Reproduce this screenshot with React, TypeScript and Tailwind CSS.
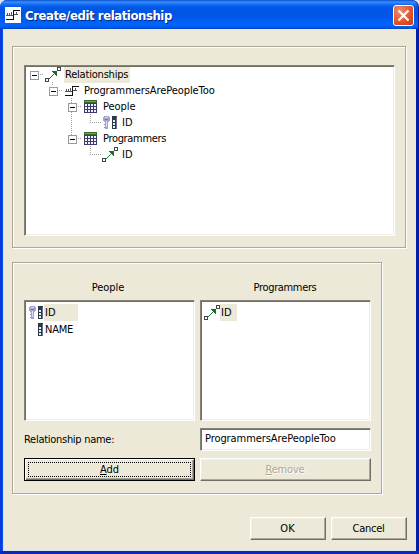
import type { ReactNode } from "react";

const sunken =
  "border border-t-[#858275] border-l-[#858275] border-r-white border-b-white bg-white shadow-[inset_1px_1px_0_#716f64,inset_-1px_-1px_0_#f1efe2]";
const raised =
  "bg-[#ece9d8] border border-t-white border-l-white border-r-[#716f64] border-b-[#716f64] shadow-[inset_-1px_-1px_0_#aca899,inset_1px_1px_0_#f1efe2]";
const etched =
  "border border-[#aca899] shadow-[1px_1px_0_#fff,inset_1px_1px_0_#fff]";

function LinkIcon() {
  return (
    <svg width="16" height="16" viewBox="0 0 16 16" className="shrink-0" shapeRendering="crispEdges">
      <path d="M4 12L11 5" stroke="#1b7d2f" strokeWidth="1" fill="none" shapeRendering="auto" />
      <path d="M7 4h5v5h-1v-1h-1v-1h-1v-1h-1v-1h-1z" fill="#14702a" />
      <rect x="0.5" y="11.5" width="3" height="3" fill="#fff" stroke="#444" />
      <rect x="12.5" y="0.5" width="3" height="3" fill="#fff" stroke="#444" />
    </svg>
  );
}

function SchemaIcon() {
  return (
    <svg width="16" height="16" viewBox="0 0 16 16" className="shrink-0" shapeRendering="crispEdges">
      <path d="M1 12.500h7.500V3.500H15" stroke="#111" fill="none" />
      <path d="M2.500 6v2M4.500 6v2M6.500 5v3M1 8.500h7M9 7.500h4M11.500 5v2" stroke="#555" fill="none" />
    </svg>
  );
}

function TableIcon() {
  return (
    <svg width="16" height="16" viewBox="0 0 16 16" className="shrink-0" shapeRendering="crispEdges">
      <rect x="1" y="1" width="13" height="13" fill="#3a3a6c" />
      <rect x="1" y="1" width="13" height="3" fill="#3f6b28" />
      <rect x="2" y="2" width="11" height="1" fill="#72a044" />
      {[5, 8, 11].map((y) =>
        [2, 5, 8, 11].map((x) => <rect key={`${x}-${y}`} x={x} y={y} width="2" height="2" fill="#f2f2ff" />)
      )}
    </svg>
  );
}

function ColumnIcon({ keyed = false }: { keyed?: boolean }) {
  return (
    <svg width="16" height="16" viewBox="0 0 16 16" className="shrink-0" shapeRendering="crispEdges">
      {keyed && (
        <g>
          <path d="M2 1h5v1h1v4h-1v1h-1v7h-3v-7h-1v-1h-1v-4h1z" fill="#a3a3d2" />
          <path d="M3 2h3v1h-3zM4 6h1v6h-1z" fill="#dadaf2" />
          <path d="M3 4h3v1h-3z" fill="#7777ac" />
          <path d="M2 9h1v1h-1zM2 12h1v1h-1z" fill="#8b8bbd" />
        </g>
      )}
      <rect x="10" y="1" width="5" height="13" fill="#2b3947" />
      <path d="M11 5h2v2h-2zM11 8h2v2h-2zM11 11h2v2h-2z" fill="#e6efff" />
      <path d="M14 2h1v12h-1z" fill="#66758c" />
    </svg>
  );
}

function Expander() {
  return (
    <svg width="9" height="9" viewBox="0 0 9 9" className="shrink-0" shapeRendering="crispEdges">
      <rect x="0.5" y="0.5" width="8" height="8" fill="#fff" stroke="#999" />
      <path d="M2 4.500h5" stroke="#000" />
    </svg>
  );
}

function TreeLines() {
  return (
    <svg
      width="110"
      height="98"
      viewBox="0 0 110 98"
      className="pointer-events-none absolute left-0 top-0"
      shapeRendering="crispEdges"
    >
      <path
        d="M13 8.500h6M27.500 16v4M32 24.500h6M46.500 32v37M51 40.500h6M65.500 48v8M65 56.500h12M51 72.500h6M65.500 80v8M65 88.500h12"
        stroke="#a0a0a0"
        strokeDasharray="1 1"
        fill="none"
      />
    </svg>
  );
}

const tree = [
  { pad: "pl-[4px]", open: true, icon: <LinkIcon />, label: "Relationships", track: "tracking-[-0.2px]", selected: true },
  { pad: "pl-[23px]", open: true, icon: <SchemaIcon />, label: "ProgrammersArePeopleToo", track: "tracking-[-0.08px]" },
  { pad: "pl-[42px]", open: true, icon: <TableIcon />, label: "People", track: "tracking-[-0.05px]" },
  { pad: "pl-[61px]", open: false, icon: <ColumnIcon keyed />, label: "ID", track: "tracking-[0px]" },
  { pad: "pl-[42px]", open: true, icon: <TableIcon />, label: "Programmers", track: "tracking-[-0.33px]" },
  { pad: "pl-[61px]", open: false, icon: <LinkIcon />, label: "ID", track: "tracking-[0px]" },
];

function Tree() {
  return (
    <div className={`relative h-[171px] pt-px pl-px ${sunken}`}>
      <TreeLines />
      {tree.map((n, i) => (
        <div key={i} className={`relative flex h-4 items-center ${n.pad}`}>
          {n.open ? <Expander /> : <span className="w-[9px]" />}
          <span className="ml-[6px] flex">{n.icon}</span>
          <span
            className={`ml-[3px] h-4 pl-px pr-[2px] leading-4 ${n.track} ${n.selected ? "bg-[#ece9d8]" : ""}`}
          >
            {n.label}
          </span>
        </div>
      ))}
    </div>
  );
}

function Button({ children, className }: { children: ReactNode; className: string }) {
  return (
    <button className={`flex h-[23px] items-center justify-center leading-4 ${raised} ${className}`}>
      {children}
    </button>
  );
}

export default function App() {
  return (
    <div className="h-[554px] w-[419px] overflow-hidden bg-[#dfe6f2] font-['DejaVu_Sans_Condensed','DejaVu_Sans',sans-serif] text-[11px] text-black">
      <div className="flex h-full flex-col rounded-t-[7px] border-b-[3px] border-b-[#0a28b4] bg-[linear-gradient(90deg,#0831d9_0,#0855e8_3px,#0020b0_416px,#001ea0_419px)]">
        <header className="mr-px flex h-[29px] shrink-0 items-center rounded-t-[7px] bg-[linear-gradient(180deg,#0a50c8_0,#3c8cff_2px,#1672f8_4px,#0058e6_7px,#0054e3_14px,#005cf4_20px,#0066ff_25px,#005df0_27px,#0040c0_29px)] pl-[5px] pr-1">
          <span className="mt-px flex bg-white">
            <SchemaIcon />
          </span>
          <h1 className="ml-1 mt-[3px] flex-1 whitespace-nowrap text-[13px] font-bold leading-5 tracking-[-0.43px] text-white [text-shadow:1px_1px_0_#0a2a80]">
            Create/edit relationship
          </h1>
          <button className="mt-[2px] flex h-[21px] w-[21px] items-center justify-center rounded-[3px] border border-white bg-[radial-gradient(circle_at_30%_25%,#ee8a6c,#dd4f26_65%,#c23c12)]">
            <svg width="13" height="13" viewBox="0 0 13 13">
              <path d="M1.500 1.500L11.500 11.500M11.500 1.500L1.500 11.500" stroke="#fff" strokeWidth="2.200" />
            </svg>
          </button>
        </header>

        <main className="mx-[3px] flex flex-1 flex-col bg-[#ece9d8] pl-[9px] pr-[9px] pt-[17px] shadow-[inset_1px_0_0_#d9e4f4,inset_0_-1px_0_#d9e4f4]">
          <section className={`mr-px h-[202px] pl-[11px] pr-[10px] pt-[18px] ${etched}`}>
            <Tree />
          </section>

          <section className={`mt-[14px] h-[232px] w-[370px] pl-[11px] pr-[10px] pt-[17px] ${etched}`}>
            <div className="grid grid-cols-[171px_171px] gap-x-[5px]">
              <h2 className="h-[20px] pr-[3px] text-center leading-4 tracking-[-0.05px]">People</h2>
              <h2 className="h-[20px] pr-px text-center leading-4 tracking-[-0.35px]">Programmers</h2>
              <ul className={`h-[121px] pl-[3px] pt-[3px] ${sunken}`}>
                <li className="flex h-[17px] items-center">
                  <ColumnIcon keyed />
                  <span className="h-[17px] w-[34px] bg-[#ece9d8] pl-px leading-[18px]">ID</span>
                </li>
                <li className="flex h-[17px] items-center">
                  <ColumnIcon />
                  <span className="pl-px leading-[18px] tracking-[-0.25px]">NAME</span>
                </li>
              </ul>
              <ul className={`h-[121px] pl-[3px] pt-[3px] ${sunken}`}>
                <li className="flex h-[17px] items-center">
                  <LinkIcon />
                  <span className="h-[17px] w-[17px] bg-[#ece9d8] pl-px leading-[18px]">ID</span>
                </li>
              </ul>
              <label className="mt-[7px] h-[23px] pt-[4px] leading-4 tracking-[-0.28px]">Relationship name:</label>
              <div className={`mt-[7px] h-[23px] pl-[4px] pt-[2px] leading-4 tracking-[-0.08px] ${sunken}`}>
                ProgrammersArePeopleToo
              </div>
              <button className="mt-[7px] h-[23px] border border-black bg-[#ece9d8] p-[3px] shadow-[inset_1px_1px_0_#fff,inset_-1px_-1px_0_#716f64,inset_-2px_-2px_0_#aca899]">
                <span className="flex h-[15px] items-center justify-center border border-dotted border-black">
                  <span className="leading-4">
                    <u>A</u>dd
                  </span>
                </span>
              </button>
              <Button className="mt-[7px] pr-px tracking-[-0.2px] text-[#aca899] [text-shadow:1px_1px_0_#fff]">
                <span>
                  <u>R</u>emove
                </span>
              </Button>
            </div>
          </section>

          <footer className="mt-[23px] flex justify-end gap-[5px]">
            <Button className="w-[76px] pr-px">OK</Button>
            <Button className="w-[76px] pr-px tracking-[-0.25px]">Cancel</Button>
          </footer>
        </main>
      </div>
    </div>
  );
}
